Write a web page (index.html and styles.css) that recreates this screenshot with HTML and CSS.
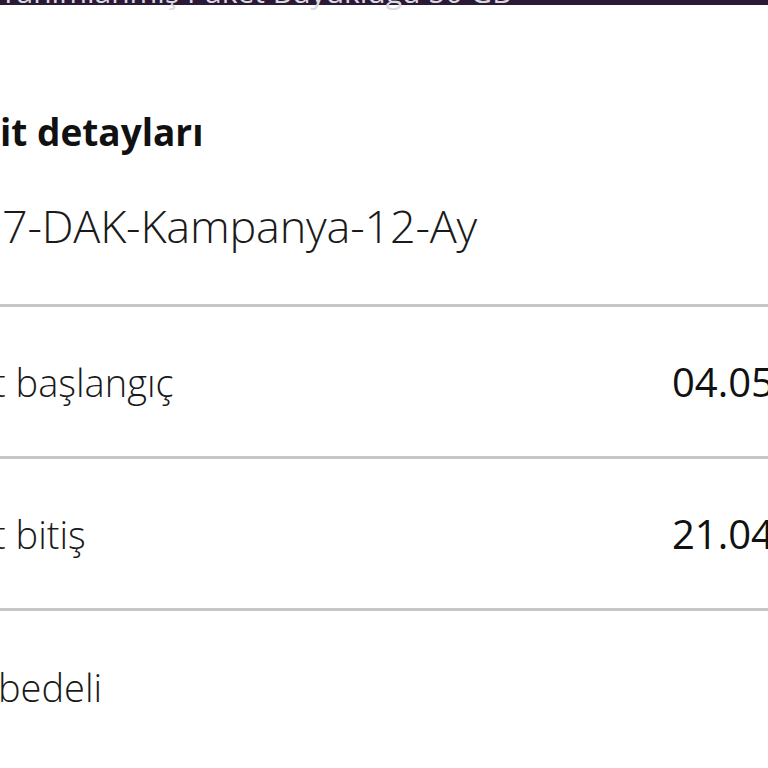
FILE: index.html
```html
<!DOCTYPE html>
<html lang="tr">
<head>
  <meta charset="UTF-8">
  <meta name="viewport" content="width=device-width, initial-scale=1.0">
  <title>Taahhüt detayları</title>
  <link rel="stylesheet" href="styles.css">
</head>
<body>
  <!-- top strip of the previous card, mostly scrolled away -->
  <div class="top-strip">
    <div class="top-strip-text">Tanımlanmış Paket Büyüklüğü 50 GB</div>
  </div>

  <div class="details">
    <h1 class="details-title">it detayları</h1>
    <div class="details-name">7-DAK-Kampanya-12-Ay</div>

    <div class="detail-row">
      <span class="detail-label">t başlangıç</span>
      <span class="detail-value">04.05.2023</span>
    </div>
    <div class="detail-row">
      <span class="detail-label">t bitiş</span>
      <span class="detail-value">21.04.2024</span>
    </div>
    <div class="detail-row last">
      <span class="detail-label label-full">bedeli</span>
      <span class="detail-value"></span>
    </div>
  </div>
</body>
</html>
```

FILE: styles.css
```css
* {
  margin: 0;
  padding: 0;
  box-sizing: border-box;
}

html, body {
  width: 768px;
  height: 768px;
  overflow: hidden;
  background-color: #fff;
}

body {
  font-family: "Open Sans", "Noto Sans", sans-serif;
  color: #1a1a1a;
}

.top-strip {
  height: 14px;
  overflow: hidden;
  background: linear-gradient(#2b1a37 0, #2b1a37 5px, #fff 5px);
}

.top-strip-text {
  margin-top: -26px;
  font-size: 30px;
  line-height: 36px;
  color: #dcd9de;
  white-space: nowrap;
}

.details-title {
  margin-top: 92px;
  font-size: 37px;
  font-weight: 700;
  line-height: 52px;
  color: #111;
  white-space: nowrap;
}

.details-name {
  margin-top: 40px;
  font-size: 45px;
  font-weight: 300;
  line-height: 56px;
  letter-spacing: -0.2px;
  white-space: nowrap;
  padding-left: 2px;
  padding-bottom: 50px;
  border-bottom: 3px solid #c6c6c6;
}

.detail-row {
  display: grid;
  grid-template-columns: 672px 1fr;
  align-items: center;
  height: 152px;
  border-bottom: 3px solid #c6c6c6;
  overflow: hidden;
  white-space: nowrap;
}

.detail-row.last {
  border-bottom: none;
}

.detail-label {
  margin-left: -7px;
  font-size: 38px;
  font-weight: 300;
}

.detail-label.label-full {
  margin-left: -2px;
}

.detail-value {
  font-size: 40px;
  font-weight: 400;
  color: #111;
}
```
